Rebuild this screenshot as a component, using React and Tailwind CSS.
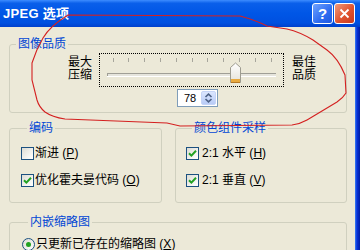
import React from "react";

const cjk = "font-['Liberation_Sans','Noto_Sans_CJK_SC',sans-serif]";

function CheckBox({ checked }) {
  return (
    <span className="w-[13px] h-[13px] shrink-0 border border-[#1c5180] bg-[linear-gradient(135deg,#dcdcd4,#f6f6f3_70%,#ffffff)] flex items-center justify-center">
      {checked && (
        <svg width="9" height="9" viewBox="0 0 9 9">
          <path d="M1 4.2 L3.4 6.6 L8 1.8" stroke="#21a121" strokeWidth="2" fill="none" />
        </svg>
      )}
    </span>
  );
}

function Radio() {
  return (
    <span className="w-[13px] h-[13px] shrink-0 rounded-full border border-[#1c5180] bg-[linear-gradient(135deg,#dcdcd4,#ffffff)] flex items-center justify-center">
      <span className="w-[5px] h-[5px] rounded-full bg-[#21a121]" />
    </span>
  );
}

function Option({ box, label, hot, gap }) {
  return (
    <div className="flex items-center h-[13px]">
      {box}
      <span className={`${gap} text-[12px] leading-[13px] text-black whitespace-nowrap`}>
        {label} (<u>{hot}</u>)
      </span>
    </div>
  );
}

function Slider() {
  const ticks = Array.from({ length: 11 }, (_, i) => 12.5 + i * 15.8);
  return (
    <svg width="183" height="32" viewBox="0 0 183 32">
      <defs>
        <linearGradient id="thumb" x1="0" y1="0" x2="0" y2="1">
          <stop offset="0" stopColor="#ffffff" />
          <stop offset="1" stopColor="#e4e2d8" />
        </linearGradient>
      </defs>
      {ticks.map((x) => (
        <line key={x} x1={Math.round(x) + 0.5} y1="4" x2={Math.round(x) + 0.5} y2="8" stroke="#a7a69c" />
      ))}
      <rect x="7" y="19" width="169" height="4" fill="#e6e5dd" />
      <line x1="7" y1="19.5" x2="176" y2="19.5" stroke="#a09f96" />
      <line x1="7.5" y1="19" x2="7.5" y2="23" stroke="#a09f96" />
      <line x1="7" y1="22.5" x2="176" y2="22.5" stroke="#ffffff" />
      <path d="M130.5 13.5 L135.5 9 L140.5 13.5 L140.5 28.5 L130.5 28.5 Z" fill="url(#thumb)" stroke="#9e9c90" />
      <rect x="131" y="25" width="9" height="3" fill="#e8a93f" />
      <line x1="131" y1="28.5" x2="140" y2="28.5" stroke="#b57a28" />
    </svg>
  );
}

function Spinner() {
  return (
    <div className="ml-[167px] mt-[2px] w-[41px] h-[18px] border border-[#7f9db9] bg-white flex items-center">
      <span className="pl-[6px] text-[11px] leading-[16px] font-['Liberation_Sans',sans-serif] text-black">
        78
      </span>
      <div className="ml-auto mr-[1px] w-[15px] h-[14px] rounded-[2px] border border-[#c5d4f7] bg-[linear-gradient(to_bottom,#dbe6fe,#b8cbf6)] flex items-center justify-center">
        <svg width="9" height="10" viewBox="0 0 9 10">
          <path d="M1.5 4 L4.5 1.2 L7.5 4" stroke="#4d6185" strokeWidth="1.6" fill="none" />
          <path d="M1.5 6 L4.5 8.8 L7.5 6" stroke="#4d6185" strokeWidth="1.6" fill="none" />
        </svg>
      </div>
    </div>
  );
}

function Group({ title, className, children }) {
  return (
    <fieldset className={`border border-[#d0d0bf] rounded-[3px] ${className}`}>
      <legend className="ml-[6px] px-[2px] text-[12px] leading-[14px] text-[#0046d5]">{title}</legend>
      {children}
    </fieldset>
  );
}

export default function App() {
  return (
    <div className={`relative w-[360px] h-[250px] overflow-hidden flex flex-col ${cjk}`}>
      <div className="h-[27px] shrink-0 flex items-center pl-[3px] pr-[5px] bg-[linear-gradient(to_bottom,#3d8cff_0%,#0a5fea_12%,#0056e6_50%,#0050e0_85%,#0040cc_100%)]">
        <span className="text-white font-bold text-[13px] leading-[16px] tracking-[0.3px]">JPEG 选项</span>
        <div className="ml-auto flex gap-[1px]">
          <div className="w-[21px] h-[21px] rounded-[3px] border border-white bg-[linear-gradient(135deg,#6fa2ff,#2e6cf0_60%,#2058e0)] flex items-center justify-center">
            <span className="text-white font-bold text-[15px] leading-[15px] font-['Liberation_Sans',sans-serif]">?</span>
          </div>
          <div className="w-[21px] h-[21px] rounded-[3px] border border-white bg-[linear-gradient(135deg,#f09a7c,#e0532f_55%,#c8391f)] flex items-center justify-center">
            <svg width="11" height="11" viewBox="0 0 11 11">
              <path d="M1.5 1.5 L9.5 9.5 M9.5 1.5 L1.5 9.5" stroke="#ffffff" strokeWidth="1.8" />
            </svg>
          </div>
        </div>
      </div>

      <div className="flex-1 flex">
        <div className="flex-1 bg-[#ece9d8] pl-[9px] pr-[8px] pt-[10px] flex flex-col">
          <Group title="图像品质" className="pb-[5px]">
            <div className="flex items-center pl-[58px] mt-[2px]">
              <div className="w-[24px] text-[12px] leading-[13px] text-black -mt-[2px]">
                最大<br />压缩
              </div>
              <div className="ml-[7px] w-[185px] h-[34px] border border-dotted border-black">
                <Slider />
              </div>
              <div className="ml-[8px] w-[24px] text-[12px] leading-[13px] text-black -mt-[2px]">
                最佳<br />品质
              </div>
            </div>
            <Spinner />
          </Group>

          <div className="flex gap-[13px] mt-[8px]">
            <Group title="编码" className="w-[153px] pt-[12px] pb-[15px] pl-[11px]">
              <div className="flex flex-col gap-[14px]">
                <Option box={<CheckBox />} label="渐进" hot="P" gap="ml-[1px]" />
                <Option box={<CheckBox checked />} label="优化霍夫曼代码" hot="O" gap="ml-[1px]" />
              </div>
            </Group>
            <Group title="颜色组件采样" className="w-[172px] pt-[12px] pb-[15px] pl-[10px]">
              <div className="flex flex-col gap-[14px]">
                <Option box={<CheckBox checked />} label="2:1 水平" hot="H" gap="ml-[3px]" />
                <Option box={<CheckBox checked />} label="2:1 垂直" hot="V" gap="ml-[3px]" />
              </div>
            </Group>
          </div>

          <Group title="内嵌缩略图" className="mt-[12px] pt-[9px] pl-[12px] pb-[10px]">
            <Option box={<Radio />} label="只更新已存在的缩略图" hot="X" gap="ml-[1px]" />
          </Group>
        </div>
        <div className="w-[5px] shrink-0 bg-[linear-gradient(to_right,#3a80f3,#0831d9_40%,#001da0)]" />
      </div>

      <svg className="absolute inset-0 pointer-events-none" width="360" height="250" viewBox="0 0 360 250">
        <path
          d="M68 15 L240 16 Q255 20 267 26 L287 29 Q300 32 313 40 L327 50 Q338 58 345 75 L346 93 Q343 98 337 102 L307 120 Q300 124 292 125 L180 126 L167 123 L65 119 Q52 117 45 112 Q39 107 37 100 L32 80 L32 63 Q36 50 43 38 Q50 26 68 15 Z"
          fill="none"
          stroke="#d42020"
          strokeWidth="1.1"
        />
      </svg>
    </div>
  );
}
